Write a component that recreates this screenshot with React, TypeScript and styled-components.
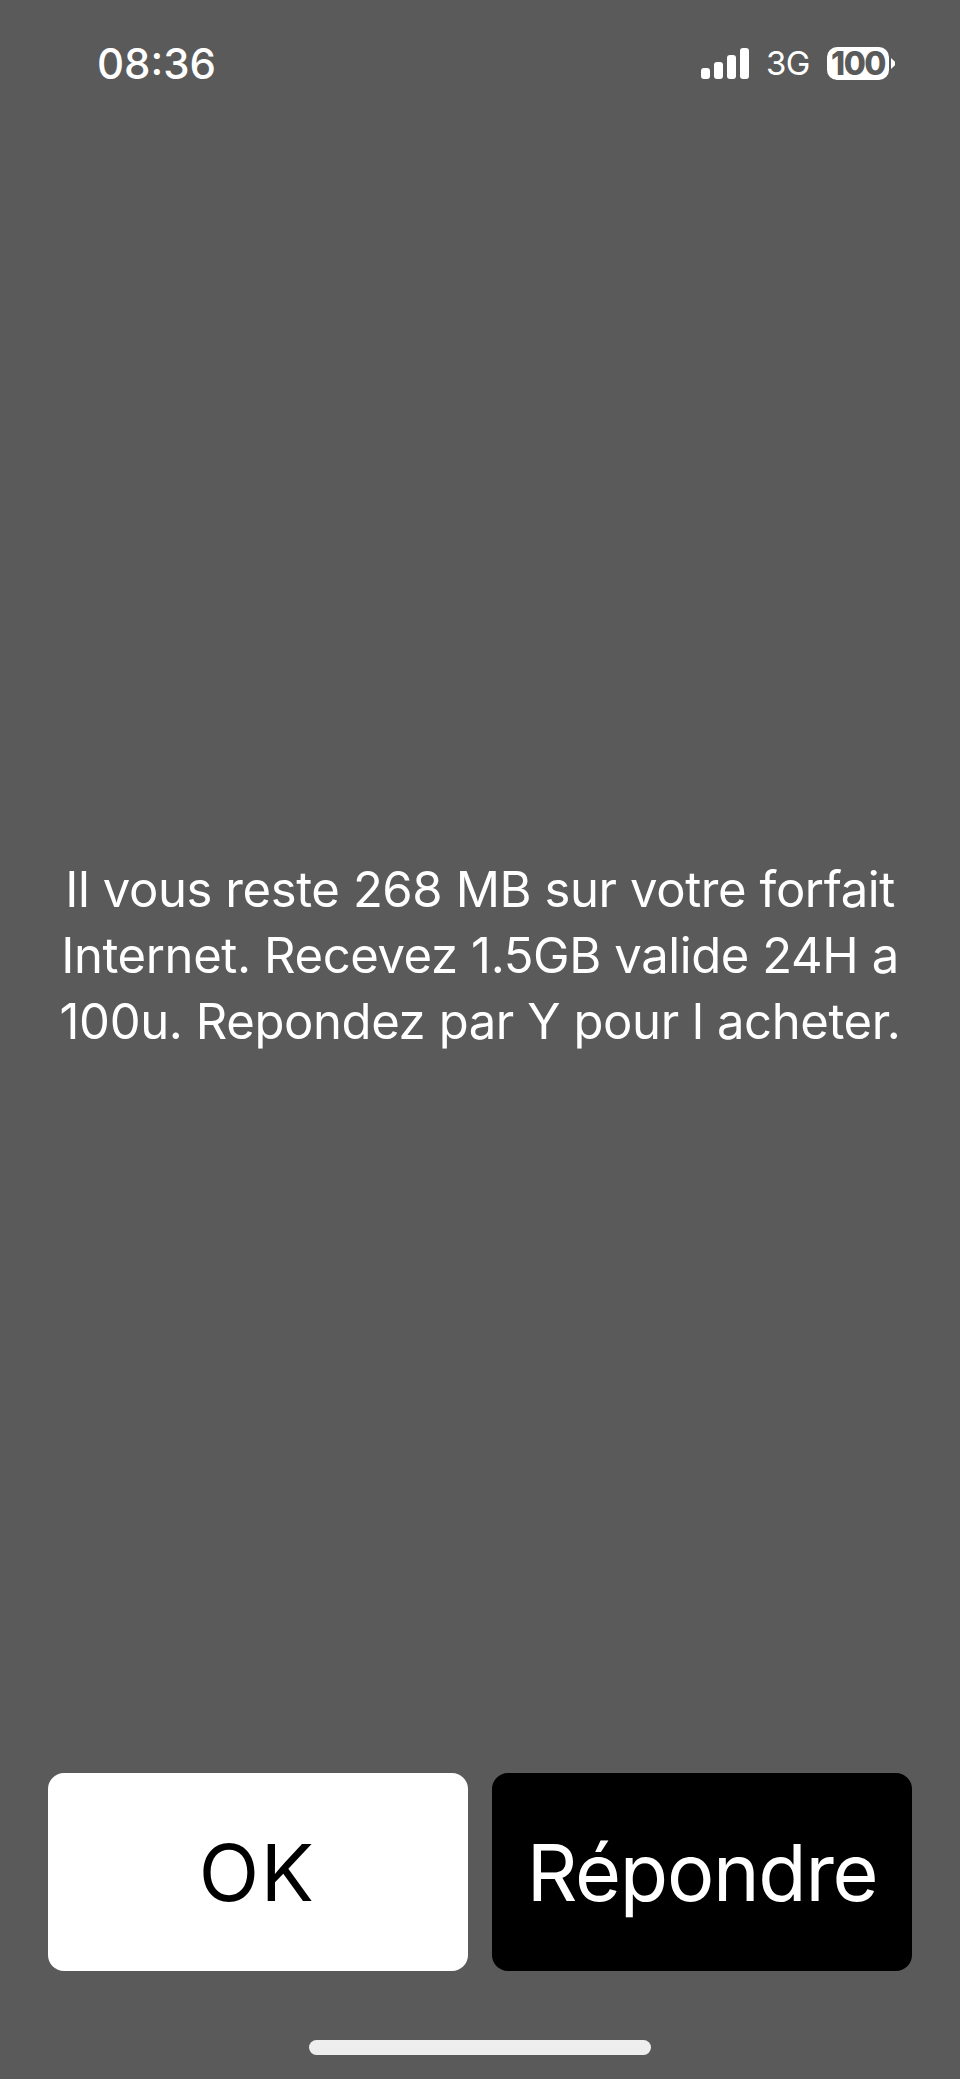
import React from 'react'
import styled, { createGlobalStyle } from 'styled-components'

const BG = '#5a5a5a'

const GlobalStyle = createGlobalStyle`
  html, body {
    margin: 0;
    padding: 0;
    background: ${BG};
  }
  * { box-sizing: border-box; }
`

const Screen = styled.div`
  width: 960px;
  height: 2079px;
  display: flex;
  flex-direction: column;
  background: ${BG};
  font-family: Inter, 'Liberation Sans', sans-serif;
  overflow: hidden;
`

const StatusBar = styled.div`
  height: 128px;
  padding: 47px 65px 0 97px;
  display: flex;
  justify-content: space-between;
  align-items: flex-start;
  color: #fff;
`

const Clock = styled.span`
  font-size: 42px;
  font-weight: 500;
  line-height: 34px;
`

const StatusIcons = styled.div`
  display: flex;
  align-items: center;
  height: 33px;
`

const Network = styled.span`
  margin: 0 17px;
  font-size: 33px;
  font-weight: 400;
  line-height: 33px;
  letter-spacing: -0.5px;
`

const Battery = styled.div`
  display: flex;
  align-items: center;
  gap: 2px;
`

const BatteryBody = styled.span`
  width: 62px;
  height: 33px;
  border-radius: 10px;
  background: #fff;
  color: ${BG};
  font-size: 32px;
  font-weight: 800;
  letter-spacing: -1.5px;
  line-height: 33px;
  text-align: center;
`

const BatteryCap = styled.span`
  width: 4px;
  height: 11px;
  background: #fff;
  clip-path: polygon(0 0, 100% 35%, 100% 65%, 0 100%);
`

const Message = styled.main`
  flex: 1;
  display: flex;
  align-items: center;
  justify-content: center;
  padding-top: 11px;
`

const MessageText = styled.p`
  margin: 0;
  color: #fff;
  font-size: 49px;
  font-weight: 400;
  line-height: 66px;
  letter-spacing: -0.4px;
  text-align: center;
  white-space: nowrap;
`

const Actions = styled.div`
  display: grid;
  grid-template-columns: 1fr 1fr;
  gap: 24px;
  padding: 0 48px;
`

const ActionButton = styled.button<{ $dark?: boolean }>`
  height: 198px;
  border: none;
  border-radius: 16px;
  padding: 0 ${p => (p.$dark ? '0' : '2px')} 0 0;
  background: ${p => (p.$dark ? '#000' : '#fff')};
  color: ${p => (p.$dark ? '#fff' : '#000')};
  font-family: inherit;
  font-size: 79px;
  font-weight: 400;
  letter-spacing: ${p => (p.$dark ? '-1.3px' : '1.5px')};
`

const HomeBar = styled.div`
  display: flex;
  justify-content: center;
  padding: 69px 0 24px;
`

const HomeIndicator = styled.span`
  width: 342px;
  height: 15px;
  border-radius: 8px;
  background: #eeeeee;
`

const SignalIcon = () => (
  <svg width="48" height="31" viewBox="0 0 48 31" fill="#fff">
    <rect x="0" y="20" width="9" height="11" rx="3" />
    <rect x="13" y="14" width="9" height="17" rx="3" />
    <rect x="26" y="7" width="9" height="24" rx="3" />
    <rect x="39" y="0" width="9" height="31" rx="3" />
  </svg>
)

const App = () => (
  <Screen>
    <GlobalStyle />
    <StatusBar>
      <Clock>08:36</Clock>
      <StatusIcons>
        <SignalIcon />
        <Network>3G</Network>
        <Battery>
          <BatteryBody>100</BatteryBody>
          <BatteryCap />
        </Battery>
      </StatusIcons>
    </StatusBar>
    <Message>
      <MessageText>
        Il vous reste 268 MB sur votre forfait
        <br />
        Internet. Recevez 1.5GB valide 24H a
        <br />
        100u. Repondez par Y pour l acheter.
      </MessageText>
    </Message>
    <Actions>
      <ActionButton>OK</ActionButton>
      <ActionButton $dark>Répondre</ActionButton>
    </Actions>
    <HomeBar>
      <HomeIndicator />
    </HomeBar>
  </Screen>
)

export default App
